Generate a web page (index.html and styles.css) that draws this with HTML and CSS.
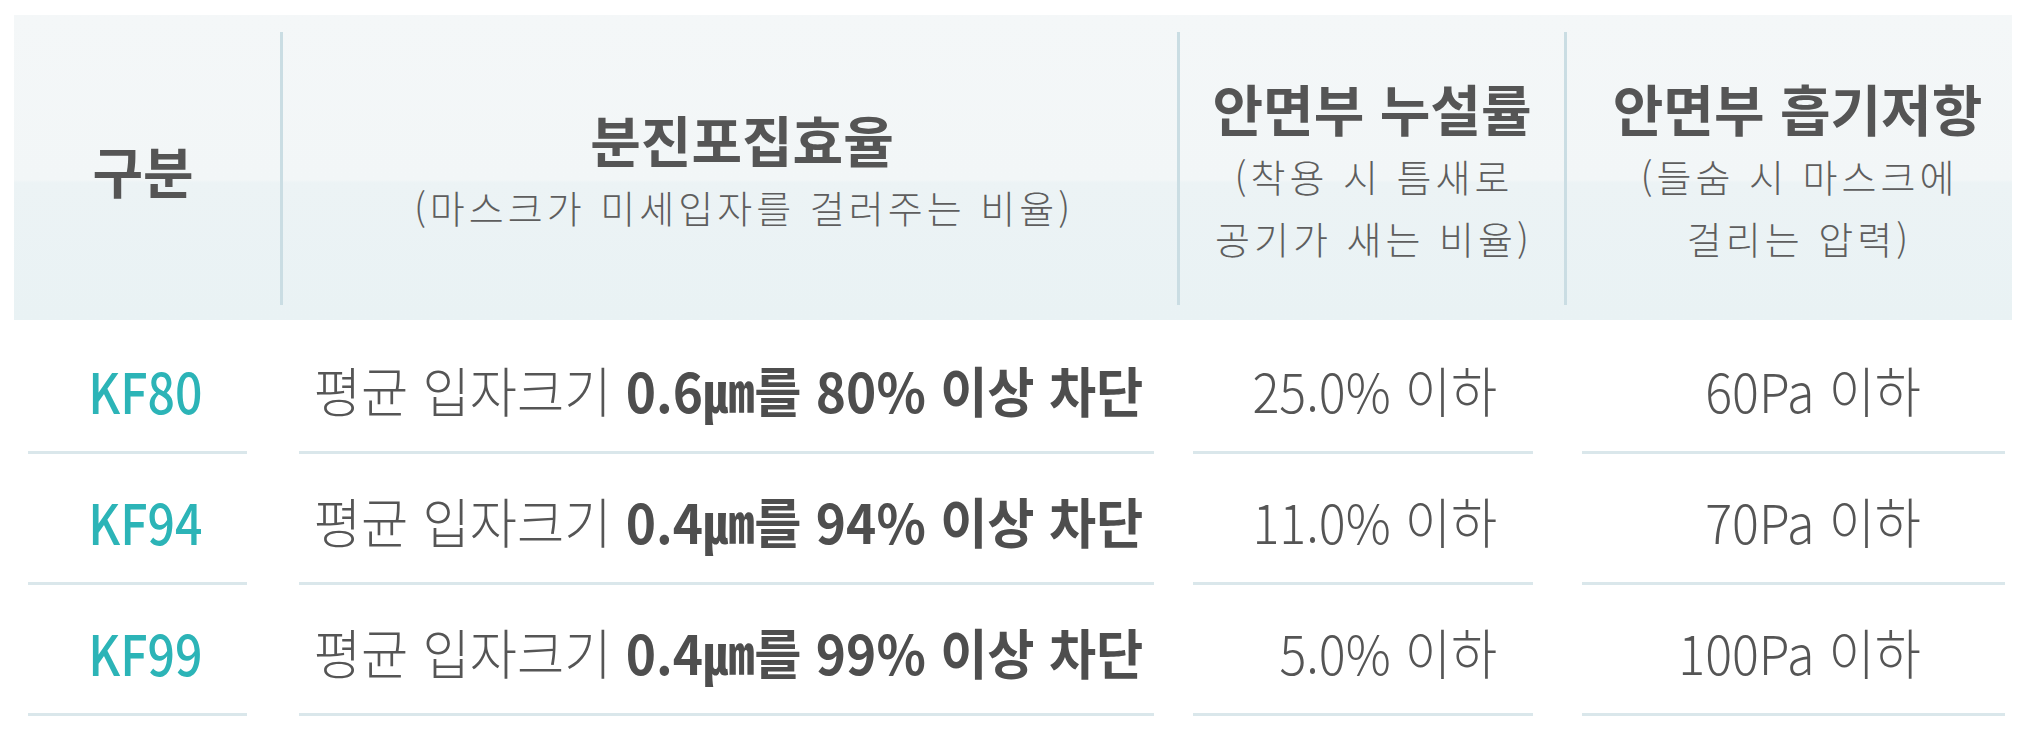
FILE: index.html
```html
<!DOCTYPE html>
<html lang="ko">
<head>
<meta charset="utf-8">
<title>KF 마스크 기준</title>
<link rel="stylesheet" href="styles.css">
</head>
<body>
<div class="page">
  <div class="thead">
    <div class="th">
      <div class="th-in">
        <span class="tt">구분</span>
      </div>
    </div>
    <div class="th">
      <div class="th-in sep">
        <span class="tt">분진포집효율</span>
        <span class="ts">(마스크가 미세입자를 걸러주는 비율)</span>
      </div>
    </div>
    <div class="th">
      <div class="th-in sep">
        <span class="tt">안면부 누설률</span>
        <span class="ts">(착용 시 틈새로<br>공기가 새는 비율)</span>
      </div>
    </div>
    <div class="th th-last">
      <div class="th-in sep">
        <span class="tt">안면부 흡기저항</span>
        <span class="ts">(들숨 시 마스크에<br>걸리는 압력)</span>
      </div>
    </div>
  </div>

  <div class="tbody">
    <div class="td c1"><span class="kf">KF80</span></div>
    <div class="td c2"><span class="desc"><span class="lt">평균 입자크기 </span><b>0.6㎛를 80% 이상 차단</b></span></div>
    <div class="td c3"><span class="val">25.0% 이하</span></div>
    <div class="td c4"><span class="val">60Pa 이하</span></div>

    <div class="td c1"><span class="kf">KF94</span></div>
    <div class="td c2"><span class="desc"><span class="lt">평균 입자크기 </span><b>0.4㎛를 94% 이상 차단</b></span></div>
    <div class="td c3"><span class="val">11.0% 이하</span></div>
    <div class="td c4"><span class="val">70Pa 이하</span></div>

    <div class="td c1"><span class="kf">KF99</span></div>
    <div class="td c2"><span class="desc"><span class="lt">평균 입자크기 </span><b>0.4㎛를 99% 이상 차단</b></span></div>
    <div class="td c3"><span class="val">5.0% 이하</span></div>
    <div class="td c4"><span class="val">100Pa 이하</span></div>
  </div>
</div>
</body>
</html>
```

FILE: styles.css
```css
html, body {
  margin: 0;
  padding: 0;
  background: #ffffff;
}

body {
  font-family: "Noto Sans CJK KR", "Noto Sans", sans-serif;
  color: #555555;
}

.page {
  width: 1998px;
  padding: 15px 0 0 14px;
}

.thead {
  display: grid;
  grid-template-columns: 266px 897px 387px 448px;
  height: 305px;
  background: linear-gradient(to bottom, #f4f7f8 0%, #f2f6f7 54%, #ecf3f5 55%, #e9f2f4 100%);
}

.th {
  padding: 17px 0 15px;
  display: flex;
}

.th-in {
  flex: 1;
  display: flex;
  flex-direction: column;
  align-items: center;
  justify-content: center;
}

.th-in.sep {
  border-left: 3px solid #cadde3;
}

.th:first-child .th-in {
  padding-right: 8px;
}

.th:nth-child(2) .th-in {
  padding-left: 24px;
}

.th-last .th-in {
  padding-left: 16px;
}

.tt {
  display: inline-block;
  font-size: 55px;
  font-weight: 700;
  line-height: 76px;
  color: #555555;
  white-space: nowrap;
}

.ts {
  display: block;
  font-size: 38px;
  font-weight: 300;
  line-height: 62px;
  letter-spacing: 4px;
  padding-left: 4px;
  color: #5e5e5e;
  text-align: center;
  white-space: nowrap;
}

.tbody {
  display: grid;
  grid-template-columns: 266px 897px 387px 448px;
  grid-auto-rows: 131px;
  margin-top: 3px;
}

.td {
  display: flex;
  align-items: center;
  border-bottom: 3px solid #dae7eb;
  white-space: nowrap;
}

.c1 {
  margin: 0 33px 0 14px;
  padding-left: 16px;
  justify-content: center;
}

.c2 {
  margin: 0 23px 0 19px;
  padding-left: 4px;
  justify-content: center;
}

.c3 {
  margin: 0 31px 0 16px;
  padding-right: 36px;
  justify-content: flex-end;
}

.c4 {
  margin: 0 7px 0 18px;
  padding-right: 84px;
  justify-content: flex-end;
}

.kf {
  display: inline-block;
  font-size: 56px;
  font-weight: 500;
  color: #2cb4b7;
  transform: scaleX(0.86);
  padding-top: 4px;
}

.desc {
  display: inline-block;
  font-size: 54px;
  color: #4e4e4e;
  transform: scaleX(0.95);
  padding-top: 4px;
}

.desc .lt {
  font-weight: 300;
  color: #555555;
}

.desc b {
  font-weight: 700;
}

.val {
  display: inline-block;
  font-size: 54px;
  font-weight: 300;
  color: #555555;
  transform: scaleX(0.93);
  transform-origin: right center;
  padding-top: 4px;
}
```
